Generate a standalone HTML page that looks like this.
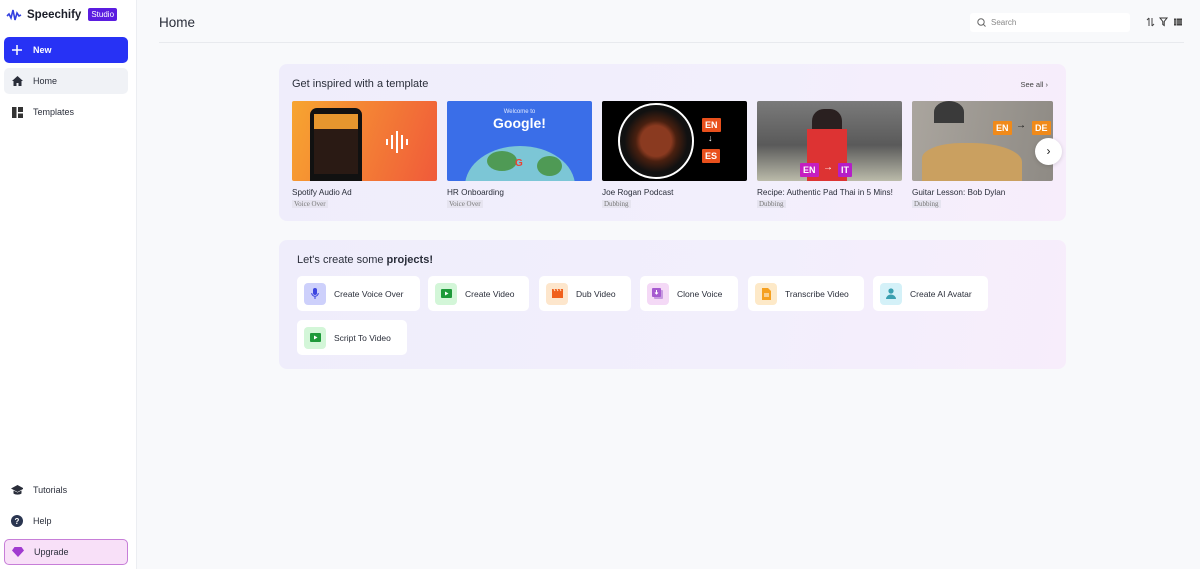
<!DOCTYPE html>
<html><head><meta charset="utf-8">
<style>
*{box-sizing:border-box;margin:0;padding:0}
body{width:1200px;height:569px;overflow:hidden;font-family:"Liberation Sans",sans-serif;background:#f8f9fb;color:#1f2330;position:relative}
.side{position:absolute;left:0;top:0;width:137px;height:569px;background:#fff;border-right:1px solid #eceef2}
.logo{position:absolute;left:6px;top:8px;display:flex;align-items:center;gap:5px}
.logo b{font-size:11.5px;font-weight:bold;color:#1b1d28}
.studio{background:#5b1de0;color:#fff;font-size:8px;padding:2px 3px;border-radius:2px;margin-left:2px}
.nav{position:absolute;left:4px;width:124px;height:26px;border-radius:5px;display:flex;align-items:center;font-size:9px;color:#2a2e3a}
.nav .ic{width:12px;height:12px;margin-left:7px;margin-right:10px;display:flex;align-items:center;justify-content:center}
.new{top:37px;background:#2732f5;color:#fff;font-weight:bold}
.home{top:68px;background:#f0f2f6}
.upg{top:539px;background:#f8e0f8;border:1px solid #c77ed8}
.title{position:absolute;left:159px;top:15px;font-size:13.5px;color:#2a2e3a}
.hline{position:absolute;left:159px;top:42px;width:1025px;height:1px;background:#e8eaee}
.search{position:absolute;left:970px;top:13px;width:160px;height:19px;background:#fff;border-radius:3px;font-size:8px;color:#888;display:flex;align-items:center;padding-left:7px;gap:5px}
.card{position:absolute;left:279px;width:787px;border-radius:8px;background:linear-gradient(100deg,#efedfb 0%,#f2effc 60%,#f7edfb 100%)}
.c1{top:64px;height:157px}
.c2{top:240px;height:129px}
.h{position:absolute;font-size:11px;color:#2a2e3a}
.seeall{position:absolute;right:18px;top:16px;font-size:7.5px;color:#444}
.th{position:absolute;top:37px;width:145px;height:80px;border-radius:2px;overflow:hidden}
.tt{position:absolute;top:124px;font-size:8.2px;color:#2a2e3a;white-space:nowrap}
.tag{position:absolute;top:136px;font-size:7px;color:#777;background:#e6e4f0;padding:0 2px;font-family:"Liberation Serif",serif}
.btn{position:absolute;height:35px;background:#fff;border-radius:5px;display:flex;align-items:center;font-size:8.5px;color:#2a2e3a}
.btn .bi{width:22px;height:22px;border-radius:4px;margin:0 8px 0 7px;display:flex;align-items:center;justify-content:center}
.badge{position:absolute;color:#fff;font-weight:bold;font-size:9px;padding:2px 3px;border-radius:1px}
</style></head><body>
<div class="side">
 <div class="logo"><svg width="16" height="12" viewBox="0 0 16 12"><path d="M1 7l2-2 2 4 2-8 2 10 2-7 2 3 2-1" stroke="#3340e0" stroke-width="1.6" fill="none"/></svg><b>Speechify</b><span class="studio">Studio</span></div>
 <div class="nav new"><span class="ic"><svg width="10" height="10"><path d="M5 0v10M0 5h10" stroke="#fff" stroke-width="1.5"/></svg></span>New</div>
 <div class="nav home"><span class="ic"><svg width="11" height="10"><path d="M5.5 0L0 5h1.5v5h3V7h2v3h3V5H11z" fill="#2a2e3a"/></svg></span>Home</div>
 <div class="nav" style="top:99px"><span class="ic"><svg width="11" height="11"><rect x="0" y="0" width="4.5" height="11" fill="#333"/><rect x="6" y="0" width="5" height="5" fill="#333"/><rect x="6" y="6.5" width="5" height="4.5" fill="#333"/></svg></span>Templates</div>
 <div class="nav" style="top:477px"><span class="ic"><svg width="13" height="10"><path d="M6.5 0L0 3.5l6.5 3.5 6.5-3.5zM2.5 5.5v3c2 1.5 6 1.5 8 0v-3l-4 2z" fill="#2a2e3a"/></svg></span>Tutorials</div>
 <div class="nav" style="top:508px"><span class="ic"><svg width="12" height="12"><circle cx="6" cy="6" r="6" fill="#2a3550"/><text x="6" y="9" font-size="8" fill="#fff" text-anchor="middle" font-family="Liberation Sans" font-weight="bold">?</text></svg></span>Help</div>
 <div class="nav upg"><span class="ic"><svg width="12" height="10"><path d="M2.5 0h7L12 3.5 6 10 0 3.5z" fill="#a03ad0"/></svg></span>Upgrade</div>
</div>
<div class="title">Home</div>
<div class="hline"></div>
<div class="search"><svg width="9" height="9"><circle cx="4" cy="4" r="3.2" stroke="#666" fill="none"/><path d="M6.3 6.3L8.5 8.5" stroke="#666"/></svg>Search</div>
<svg style="position:absolute;left:1146px;top:17px" width="44" height="10"><path d="M3 9V1M1 3l2-2M6 1v8M8 7l-2 2" stroke="#444" stroke-width="1" fill="none"/><path d="M14 1h7l-2.8 3.5v4l-1.4-1V4.5z" stroke="#333" fill="none"/><rect x="28" y="1.5" width="8" height="7" fill="#444"/><path d="M28 4h8M28 6h8M30.5 1.5v7" stroke="#ddd" stroke-width=".6"/></svg>

<div class="card c1">
 <div class="h" style="left:13px;top:14px">Get inspired with a template</div>
 <div class="seeall">See all ›</div>
 <div class="th" style="left:13px;background:linear-gradient(110deg,#f7a530,#f05a3a)">
  <div style="position:absolute;left:18px;top:7px;width:52px;height:80px;background:#111;border-radius:7px"><div style="margin:6px 4px;height:60px;background:linear-gradient(#e6962e 25%,#2a1a14 25%)"></div></div>
  <svg style="position:absolute;left:93px;top:28px" width="26" height="26"><path d="M2 10v6M7 6v14M12 2v22M17 6v14M22 10v6" stroke="#fff" stroke-width="2"/></svg>
 </div>
 <div class="th" style="left:168px;background:#3a6ee8">
  <div style="position:absolute;top:8px;width:100%;text-align:center;color:#dfe8ff;font-size:6px">Welcome to</div>
  <div style="position:absolute;top:14px;width:100%;text-align:center;color:#fff;font-size:14px;font-weight:bold">Google!</div>
  <div style="position:absolute;left:18px;top:45px;width:110px;height:80px;border-radius:50%;background:#7cc6d6"></div>
  <div style="position:absolute;left:40px;top:50px;width:30px;height:20px;border-radius:50%;background:#4f9a55"></div>
  <div style="position:absolute;left:90px;top:55px;width:25px;height:20px;border-radius:50%;background:#4f9a55"></div>
  <div style="position:absolute;left:68px;top:57px;color:#ea4335;font-size:10px;font-weight:bold">G</div>
 </div>
 <div class="th" style="left:323px;background:#000">
  <div style="position:absolute;left:16px;top:2px;width:76px;height:76px;border-radius:50%;border:2px solid #fff;background:radial-gradient(circle,#8a3a20 30%,#4a2010 40%,#111 62%)"></div>
  <div class="badge" style="left:100px;top:17px;background:#e9501c">EN</div>
  <div style="position:absolute;left:106px;top:32px;color:#fff;font-size:9px">↓</div>
  <div class="badge" style="left:100px;top:48px;background:#e9501c">ES</div>
 </div>
 <div class="th" style="left:478px;background:linear-gradient(#7a7a7a,#5a5a5a 55%,#bba 100%)">
  <div style="position:absolute;left:55px;top:8px;width:30px;height:72px;background:#2a2020;border-radius:12px 12px 0 0"></div>
  <div style="position:absolute;left:50px;top:28px;width:40px;height:52px;background:#d33"></div>
  <div class="badge" style="left:43px;top:62px;background:#c51ec0">EN</div>
  <div style="position:absolute;left:66px;top:61px;color:#fff;font-size:10px">→</div>
  <div class="badge" style="left:81px;top:62px;background:#b51ec8">IT</div>
 </div>
 <div class="th" style="left:633px;width:141px;background:linear-gradient(100deg,#aaa59e,#8e8a84)">
  <div style="position:absolute;left:10px;top:42px;width:100px;height:38px;background:#caa060;border-radius:40% 50% 0 0"></div>
  <div style="position:absolute;left:22px;top:0;width:30px;height:22px;background:#3a3a3a;border-radius:50% 50% 0 0"></div>
  <div class="badge" style="left:81px;top:20px;background:#f08a1a">EN</div>
  <div style="position:absolute;left:104px;top:19px;color:#111;font-size:10px">→</div>
  <div class="badge" style="left:120px;top:20px;background:#f08a1a">DE</div>
 </div>
 <div style="position:absolute;left:756px;top:74px;width:27px;height:27px;border-radius:50%;background:#fff;box-shadow:0 1px 4px rgba(0,0,0,.15);text-align:center;line-height:26px;font-size:12px;color:#222">›</div>
 <div class="tt" style="left:13px">Spotify Audio Ad</div><div class="tag" style="left:13px">Voice Over</div>
 <div class="tt" style="left:168px">HR Onboarding</div><div class="tag" style="left:168px">Voice Over</div>
 <div class="tt" style="left:323px">Joe Rogan Podcast</div><div class="tag" style="left:323px">Dubbing</div>
 <div class="tt" style="left:478px">Recipe: Authentic Pad Thai in 5 Mins!</div><div class="tag" style="left:478px">Dubbing</div>
 <div class="tt" style="left:633px">Guitar Lesson: Bob Dylan</div><div class="tag" style="left:633px">Dubbing</div>
</div>

<div class="card c2">
 <div class="h" style="left:18px;top:14px">Let's create some <b>projects!</b></div>
 <div class="btn" style="left:18px;top:36px;width:123px"><span class="bi" style="background:#cdd0fb"><svg width="8" height="12"><rect x="2" y="0" width="4" height="7" rx="2" fill="#3b44e0"/><path d="M.7 5a3.3 3.3 0 006.6 0M4 8.5V11" stroke="#3b44e0" fill="none"/></svg></span>Create Voice Over</div>
 <div class="btn" style="left:149px;top:36px;width:101px"><span class="bi" style="background:#d3f6d8"><svg width="11" height="9"><rect width="11" height="9" rx="1" fill="#1e9a3a"/><path d="M4 2.5v4l3.5-2z" fill="#fff"/></svg></span>Create Video</div>
 <div class="btn" style="left:260px;top:36px;width:92px"><span class="bi" style="background:#fde6cc"><svg width="11" height="9"><rect y="2" width="11" height="7" fill="#f0601c"/><path d="M0 0h11v2H0z" fill="#f0601c"/><path d="M2 0l1 2M5 0l1 2M8 0l1 2" stroke="#fde6cc"/></svg></span>Dub Video</div>
 <div class="btn" style="left:361px;top:36px;width:98px"><span class="bi" style="background:#f4d9f6"><svg width="12" height="12"><rect x="2" y="2" width="9" height="9" rx="1" fill="#c79ae0"/><rect x="0" y="0" width="9" height="9" rx="1" fill="#a65ad0"/><path d="M4.5 2v4M3 4.5l1.5 1.5 1.5-1.5" stroke="#fff" fill="none"/></svg></span>Clone Voice</div>
 <div class="btn" style="left:469px;top:36px;width:116px"><span class="bi" style="background:#fde9c8"><svg width="9" height="12"><path d="M0 0h6l3 3v9H0z" fill="#f5a020"/><path d="M2 6h5M2 8h5" stroke="#fff"/></svg></span>Transcribe Video</div>
 <div class="btn" style="left:594px;top:36px;width:115px"><span class="bi" style="background:#d4f1f8"><svg width="10" height="11"><circle cx="5" cy="3" r="2.6" fill="#3aa0b0"/><path d="M0 11a5 4.5 0 0110 0z" fill="#3aa0b0"/></svg></span>Create AI Avatar</div>
 <div class="btn" style="left:18px;top:80px;width:110px"><span class="bi" style="background:#d3f6d8"><svg width="11" height="9"><rect width="11" height="9" rx="1" fill="#1e9a3a"/><path d="M4 2.5v4l3.5-2z" fill="#fff"/></svg></span>Script To Video</div>
</div>
</body></html>
